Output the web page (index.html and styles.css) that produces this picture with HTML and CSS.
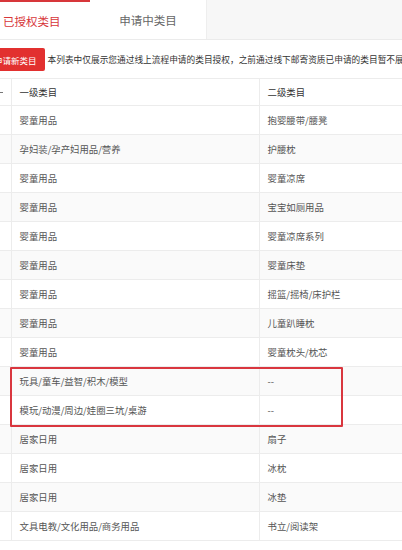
FILE: index.html
```html
<!DOCTYPE html>
<html lang="zh-CN">
<head>
    <meta charset="UTF-8">
    <meta name="viewport" content="width=device-width, initial-scale=1.0">
    <title>类目授权</title>
    <link rel="stylesheet" href="styles.css">
</head>
<body>
    <div class="tabs">
        <div class="tab active">已授权类目</div>
        <div class="tab">申请中类目</div>
    </div>

    <div class="notice">
        <button class="apply-btn">申请新类目</button>
        <span class="notice-text">本列表中仅展示您通过线上流程申请的类目授权，之前通过线下邮寄资质已申请的类目暂不展示</span>
    </div>

    <div class="table-wrap">
        <table class="cat-table">
            <colgroup>
                <col class="col-idx">
                <col class="col-first">
                <col class="col-second">
            </colgroup>
            <thead>
                <tr>
                    <th class="idx"><span class="cut-mark"></span></th>
                    <th>一级类目</th>
                    <th>二级类目</th>
                </tr>
            </thead>
            <tbody>
                <tr><td class="idx"></td><td>婴童用品</td><td>抱婴腰带/腰凳</td></tr>
                <tr><td class="idx"></td><td>孕妇装/孕产妇用品/营养</td><td>护腰枕</td></tr>
                <tr><td class="idx"></td><td>婴童用品</td><td>婴童凉席</td></tr>
                <tr><td class="idx"></td><td>婴童用品</td><td>宝宝如厕用品</td></tr>
                <tr><td class="idx"></td><td>婴童用品</td><td>婴童凉席系列</td></tr>
                <tr><td class="idx"></td><td>婴童用品</td><td>婴童床垫</td></tr>
                <tr><td class="idx"></td><td>婴童用品</td><td>摇篮/摇椅/床护栏</td></tr>
                <tr><td class="idx"></td><td>婴童用品</td><td>儿童趴睡枕</td></tr>
                <tr><td class="idx"></td><td>婴童用品</td><td>婴童枕头/枕芯</td></tr>
                <tr><td class="idx"></td><td>玩具/童车/益智/积木/模型</td><td>--</td></tr>
                <tr><td class="idx"></td><td>模玩/动漫/周边/娃圈三坑/桌游</td><td>--</td></tr>
                <tr><td class="idx"></td><td>居家日用</td><td>扇子</td></tr>
                <tr><td class="idx"></td><td>居家日用</td><td>冰枕</td></tr>
                <tr><td class="idx"></td><td>居家日用</td><td>冰垫</td></tr>
                <tr><td class="idx"></td><td>文具电教/文化用品/商务用品</td><td>书立/阅读架</td></tr>
            </tbody>
        </table>
        <!-- 标注框 -->
        <div class="highlight"></div>
    </div>
</body>
</html>
```

FILE: styles.css
```css
body {
    margin: 0;
    font-family: "Noto Sans CJK SC", "Microsoft YaHei", sans-serif;
    color: #555;
    background: #fff;
    overflow: hidden;
}
.tabs {
    display: flex;
    height: 40px;
    background: #f7f7f7;
    border-bottom: 1px solid #ebebeb;
    box-sizing: border-box;
}
.tab {
    display: flex;
    align-items: center;
    justify-content: center;
    width: 117px;
    font-size: 11.5px;
    color: #666;
    background: #fff;
    border-right: 1px solid #eee;
    box-sizing: border-box;
}
.tab.active {
    width: 90px;
    justify-content: flex-start;
    padding-left: 3px;
    color: #d7363a;
    border-top: 2px solid #d7363a;
    border-right: none;
}
.notice {
    display: flex;
    align-items: center;
    gap: 3px;
    margin-top: 8px;
    height: 23px;
    white-space: nowrap;
    overflow: hidden;
}
.apply-btn {
    margin-left: -14px;
    height: 23px;
    padding: 0 8px;
    border: none;
    border-radius: 2px;
    background: #e2302f;
    color: #fff;
    font-family: inherit;
    font-size: 8.5px;
}
.notice-text {
    font-size: 8.7px;
    color: #333;
}
.table-wrap {
    position: relative;
    margin-top: 7px;
}
.cat-table {
    width: 402px;
    table-layout: fixed;
    border-collapse: collapse;
    font-size: 9.4px;
}
.col-idx { width: 11px; }
.col-first { width: 248px; }
.cat-table th,
.cat-table td {
    padding: 0 8px;
    text-align: left;
    border-top: 1px solid #ececec;
    border-left: 1px solid #ececec;
    white-space: nowrap;
    overflow: hidden;
}
.cat-table th {
    height: 26px;
    font-weight: normal;
    color: #333;
}
.cat-table td {
    height: 28px;
}
.cat-table tr:last-child td {
    border-bottom: 1px solid #ececec;
}
.cat-table .idx {
    padding: 0;
    border-left: none;
    position: relative;
}
.cat-table tbody tr:nth-child(even) {
    background: #fafafa;
}
.cut-mark {
    position: absolute;
    left: 0;
    top: 50%;
    width: 3px;
    height: 1px;
    background: #777;
}
.highlight {
    position: absolute;
    left: 10px;
    top: 289px;
    width: 333px;
    height: 60px;
    border: 2px solid #d9363e;
    box-sizing: border-box;
    border-radius: 1px;
}
```
